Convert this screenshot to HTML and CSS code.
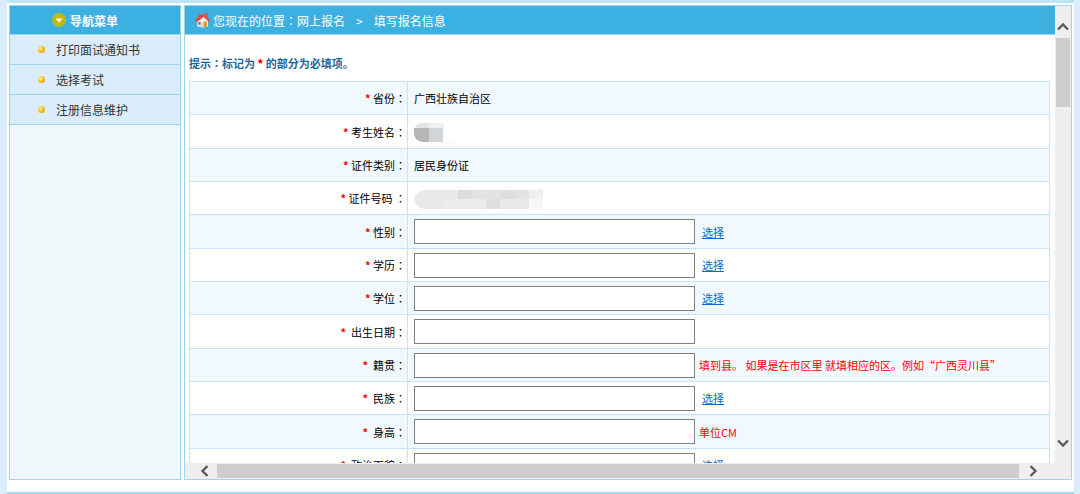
FILE: index.html
```html
<!DOCTYPE html>
<html lang="zh-CN">

<head>
    <meta charset="utf-8">
    <title>网上报名</title>
    <link rel="stylesheet" href="styles.css">
</head>

<body>

    <div class="page">
        <div class="sidebar">
            <h2 class="menu-title">
                <svg width="14" height="14" viewBox="0 0 14 14">
                    <circle cx="7" cy="7" r="7" fill="#b9bd1c" />
                    <circle cx="7" cy="7" r="5" fill="#c9b60c" />
                    <path d="M3.5 5.5h7L7 9.5z" fill="#fff" />
                </svg>
                导航菜单
            </h2>
            <ul class="menu">
                <li><a href="#">打印面试通知书</a></li>
                <li><a href="#">选择考试</a></li>
                <li><a href="#">注册信息维护</a></li>
            </ul>
        </div>

        <div class="main">
            <div class="content">
                <div class="location">
                    <svg width="15" height="15" viewBox="0 0 15 15">
                        <path d="M2.5 7v6.5l5.5 1 5-1V7L8 3z" fill="#f4f1ea" />
                        <path d="M2.5 9v4.5l5.5 1v-5z" fill="#d9dde0" />
                        <path d="M0 7.5 4.5 1.5h6L15 7.5l-1.5 1L8.5 4 2 9z" fill="#e2483d" />
                        <path d="M10.5 0h2v3.5l-2-1.5z" fill="#c9564a" />
                        <path d="M3.5 9h2v2.5h-2z" fill="#7a6a60" />
                        <path d="M8.5 8.5h3.5v5.3l-3.5.7z" fill="#e79a25" />
                    </svg>
                    <span>您现在的位置<i class="colon">：</i>网上报名</span>
                    <span class="arrow">&gt;</span>
                    <span>填写报名信息</span>
                </div>

                <p class="tip">提示<i class="colon">：</i>标记为 <b class="star">*</b> 的部分为必填项。</p>

                <table class="form">
                    <tr>
                        <th><b class="star">*</b> 省份<i class="colon">：</i></th>
                        <td>广西壮族自治区</td>
                    </tr>
                    <tr>
                        <th><b class="star">*</b> 考生姓名<i class="colon">：</i></th>
                        <td>
                            <svg class="mosaic" width="38" height="22" viewBox="0 0 38 22">
                                <path d="M8 1h7v5H1q1-5 7-5z" fill="#e4e4e4" />
                                <path d="M15 1h15v5H15z" fill="#edf0f2" />
                                <path d="M0 6h15v14H8q-8-2-8-9z" fill="#b6b6b5" />
                                <path d="M15 6h14v14H15z" fill="#d2d5d8" />
                                <path d="M29 20h9v1h-9z" fill="#e9f5fa" />
                            </svg>
                        </td>
                    </tr>
                    <tr>
                        <th><b class="star">*</b> 证件类别<i class="colon">：</i></th>
                        <td>居民身份证</td>
                    </tr>
                    <tr>
                        <th><b class="star">*</b> 证件号码 <i class="colon">：</i></th>
                        <td>
                            <svg class="mosaic" width="130" height="20" viewBox="0 0 130 20">
                                <path d="M10 1h105l14-1v20H10Q2 18 0 10 2 3 10 1z" fill="#e9e9e9" />
                                <path d="M44 1h14v9H44z" fill="#dcdcdd" />
                                <path d="M58 1h28v9H58zM101 1h14v9h-14z" fill="#e3e3e4" />
                                <path d="M72 10h14v10H72z" fill="#dfdfe0" />
                                <path d="M86 1h15v9H86z" fill="#dfdfe0" />
                                <path d="M115 1h14v9h-14z" fill="#f0f0f0" />
                                <path d="M115 10h14v10h-14z" fill="#f7f7f7" />
                                <path d="M30 10h42v10H30z" fill="#ececec" />
                            </svg>
                        </td>
                    </tr>
                    <tr>
                        <th><label for="xingbie"><b class="star">*</b> 性别<i class="colon">：</i></label></th>
                        <td><input type="text" id="xingbie"><a class="pick" href="#">选择</a></td>
                    </tr>
                    <tr>
                        <th><label for="xueli"><b class="star">*</b> 学历<i class="colon">：</i></label></th>
                        <td><input type="text" id="xueli"><a class="pick" href="#">选择</a></td>
                    </tr>
                    <tr>
                        <th><label for="xuewei"><b class="star">*</b> 学位<i class="colon">：</i></label></th>
                        <td><input type="text" id="xuewei"><a class="pick" href="#">选择</a></td>
                    </tr>
                    <tr>
                        <th><label for="birthday"><b class="star">*</b>&nbsp; 出生日期<i class="colon">：</i></label></th>
                        <td><input type="text" id="birthday"></td>
                    </tr>
                    <tr>
                        <th><label for="jiguan"><b class="star">*</b>&nbsp; 籍贯<i class="colon">：</i></label></th>
                        <td><input type="text" id="jiguan"><span class="note">填到县。 如果是在市区里 就填相应的区。例如“广西灵川县”</span></td>
                    </tr>
                    <tr>
                        <th><label for="minzu"><b class="star">*</b>&nbsp; 民族<i class="colon">：</i></label></th>
                        <td><input type="text" id="minzu"><a class="pick" href="#">选择</a></td>
                    </tr>
                    <tr>
                        <th><label for="shengao"><b class="star">*</b>&nbsp; 身高<i class="colon">：</i></label></th>
                        <td><input type="text" id="shengao"><span class="note">单位CM</span></td>
                    </tr>
                    <tr>
                        <th><label for="zhengzhi"><b class="star">*</b>&nbsp; 政治面貌<i class="colon">：</i></label></th>
                        <td><input type="text" id="zhengzhi"><a class="pick" href="#">选择</a></td>
                    </tr>
                </table>
            </div>

            <div class="scroll-y">
                <button type="button" aria-label="向上">
                    <svg width="12" height="9" viewBox="0 0 12 9"><path d="M1 7.5 6 2.5l5 5" /></svg>
                </button>
                <div class="thumb-y"></div>
                <button type="button" aria-label="向下">
                    <svg width="12" height="9" viewBox="0 0 12 9"><path d="M1 1.5l5 5 5-5" /></svg>
                </button>
            </div>
            <div class="scroll-x">
                <button type="button" aria-label="向左">
                    <svg width="9" height="12" viewBox="0 0 9 12"><path d="M7.5 1l-5 5 5 5" /></svg>
                </button>
                <div class="thumb-x"></div>
                <button type="button" aria-label="向右">
                    <svg width="9" height="12" viewBox="0 0 9 12"><path d="M1.5 1l5 5-5 5" /></svg>
                </button>
            </div>
        </div>
    </div>

</body>

</html>
```

FILE: styles.css
```css
* {
    box-sizing: border-box;
}

body {
    margin: 0;
    background: #dbedfc;
    font-family: "Noto Sans CJK SC", sans-serif;
    font-size: 11px;
    color: #000;
}

.page {
    display: flex;
    gap: 3px;
    height: 100vh;
    margin: 0 6px 0 7px;
    padding: 2px 2px 12px;
    border-top: 3px solid #bde6f5;
    border-bottom: 2px solid #a5d7ec;
    background: #fff;
}

/* centred colon */
.colon {
    font-family: "Noto Sans CJK TC", sans-serif;
    font-style: normal;
    font-feature-settings: "locl" 0;
    -webkit-locale: "zh-TW";
}

.star {
    color: #f00;
}

/* left menu */
.sidebar {
    width: 172px;
    border: 1px solid #9fd4ea;
    background: #f0f8fb;
}

.menu-title {
    display: flex;
    align-items: center;
    justify-content: center;
    gap: 4px;
    height: 29px;
    margin: 0;
    padding-right: 20px;
    border-bottom: 1px solid #9fd4ea;
    background: #3db0e2;
    color: #fff;
    font-size: 12px;
}

.menu {
    margin: 0;
    padding: 0;
    list-style: none;
}

.menu li {
    display: flex;
    align-items: center;
    gap: 11px;
    height: 30px;
    padding-left: 28px;
    border-bottom: 1px solid #9fd4ea;
    background: #dbedfb;
}

.menu li::before {
    content: "";
    width: 7px;
    height: 7px;
    border-radius: 50%;
    background: radial-gradient(circle at 35% 35%, #fff3a0, #f9b913 50%, #d98a10);
}

.menu a {
    color: #333;
    font-size: 12px;
    text-decoration: none;
}

/* right panel */
.main {
    flex: 1;
    display: grid;
    grid-template-columns: 1fr 16px;
    grid-template-rows: 1fr 16px;
    min-width: 0;
    border: 1px solid #9fd4ea;
}

.content {
    min-height: 0;
    overflow: hidden;
}

.location {
    display: flex;
    align-items: center;
    height: 29px;
    padding-left: 10px;
    border-bottom: 1px solid #9fd4ea;
    background: #3db0e2;
    color: #fff;
    font-size: 12px;
}

.location svg {
    margin-right: 3px;
}

.arrow {
    margin: 0 11px;
}

.tip {
    margin: 20px 4px 9px;
    line-height: 17px;
    color: #1f6699;
    font-weight: bold;
}

.form {
    width: calc(100% - 9px);
    margin-left: 4px;
    border-collapse: collapse;
    table-layout: fixed;
}

.form tr {
    height: 33px;
}

.form tr:nth-child(3n + 2) {
    height: 34px;
}

.form tr:nth-child(odd) {
    background: #f1f8fe;
}

.form th,
.form td {
    padding: 0;
    border: 1px solid #c8e3f5;
    font-weight: normal;
    white-space: nowrap;
}

.form th {
    width: 218px;
    padding-right: 1px;
    text-align: right;
}

.form td {
    padding-left: 6px;
}

.form input {
    width: 281px;
    height: 25px;
    padding: 0 4px;
    border: 1px solid #7f7f7f;
    background: #fff;
    font-family: inherit;
    font-size: 11px;
    vertical-align: middle;
}

.pick,
.note {
    vertical-align: middle;
}

.pick {
    margin-left: 7px;
    color: #0a6cc8;
}

.note {
    margin-left: 4px;
    color: #f00;
}

.mosaic {
    display: block;
    margin-top: 2px;
}

/* scroll bars */
.scroll-y,
.scroll-x {
    display: flex;
    background: #efefef;
}

.scroll-y {
    flex-direction: column;
    align-items: center;
    padding: 12px 0;
}

.scroll-x {
    grid-column: 1 / 3;
    align-items: center;
    padding: 0 30px 0 11px;
}

.scroll-y button,
.scroll-x button {
    display: flex;
    align-items: center;
    justify-content: center;
    width: 16px;
    height: 16px;
    padding: 0;
    border: none;
    background: none;
}

.scroll-y path,
.scroll-x path {
    fill: none;
    stroke: #5c5c5c;
    stroke-width: 2.4;
}

.thumb-y {
    width: 14px;
    height: 69px;
    margin: 4px 0 auto;
    background: #cdcdcd;
}

.thumb-x {
    flex: 1;
    height: 14px;
    margin: 0 6px 0 5px;
    background: #cdcdcd;
}
```
